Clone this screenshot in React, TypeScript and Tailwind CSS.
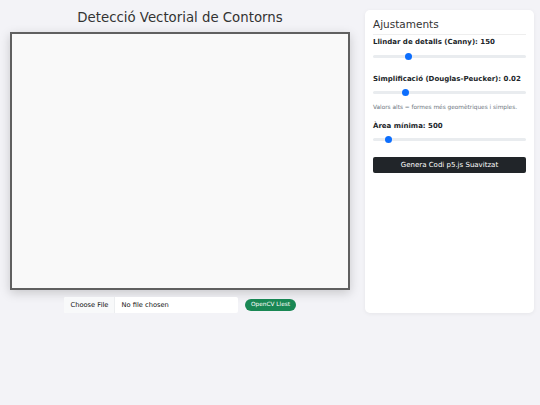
import React from "react";

const font = { fontFamily: '"DejaVu Sans", Verdana, sans-serif' };

type SliderProps = {
  value: number;
  min: number;
  max: number;
  className?: string;
};

const Slider = ({ value, min, max, className }: SliderProps) => {
  const pct = (value - min) / (max - min);
  return (
    <div className={`relative flex h-[8px] items-center ${className ?? ""}`}>
      <div className="h-[3px] w-full rounded-full bg-[#e9ecef]" />
      <div
        className="absolute top-[0.5px] h-[7px] w-[7px] rounded-full bg-[#0d6efd]"
        style={{ left: `calc(${pct} * (100% - 7px))` }}
      />
    </div>
  );
};

const Label = ({ children, className }: { children: React.ReactNode; className?: string }) => (
  <div className={`text-[7px] font-bold leading-[9px] text-[#212529] ${className ?? ""}`}>
    {children}
  </div>
);

export default function App() {
  return (
    <div
      className="flex min-h-[405px] w-full gap-[15px] bg-[#f3f3f7] pl-[10px] pt-[10px]"
      style={font}
    >
      {/* left column */}
      <div className="flex w-[340px] flex-col items-center">
        <h1 className="mb-[6px] text-[13.3px] font-normal leading-[16px] text-[#333]">
          Detecció Vectorial de Contorns
        </h1>
        <div className="h-[258px] w-[340px] border-2 border-[#606060] bg-[#f9f9f9] shadow-[0_3px_10px_rgba(0,0,0,0.18)]" />
        <div className="mt-[7px] flex items-center gap-[7px]">
          <div className="flex h-[16px] w-[174px] items-center overflow-hidden rounded-[2px] bg-white text-[6.7px] text-[#111]">
            <div className="flex h-full items-center border-r border-[#eceef0] bg-[#f8f9fa] px-[6px]">
              Choose File
            </div>
            <div className="px-[6px]">No file chosen</div>
          </div>
          <span className="flex h-[12px] items-center rounded-full bg-[#198754] px-[5.5px] text-[5.8px] leading-none text-white">
            OpenCV Llest
          </span>
        </div>
      </div>

      {/* settings panel */}
      <div className="flex h-[303px] w-[169px] flex-col rounded-[5px] bg-white px-[8px] pt-[8px] shadow-[0_1px_4px_rgba(0,0,0,0.06)]">
        <h2 className="border-b border-[#eeeeee] pb-[3px] text-[10.5px] font-normal leading-[13px] text-[#333]">
          Ajustaments
        </h2>

        <Label className="mt-[3px]">Llindar de detalls (Canny): 150</Label>
        <Slider value={150} min={50} max={500} className="mt-[5px]" />

        <Label className="mt-[15px]">Simplificació (Douglas-Peucker): 0.02</Label>
        <Slider value={0.02} min={0} max={0.1} className="mt-[4px]" />
        <div className="mt-[7px] text-[5.8px] leading-[8px] text-[#6c757d]">
          Valors alts = formes més geomètriques i simples.
        </div>

        <Label className="mt-[11px]">Àrea mínima: 500</Label>
        <Slider value={500} min={100} max={5000} className="mt-[4px]" />

        <button className="mt-[14px] flex h-[16px] w-full items-center justify-center rounded-[2px] bg-[#212529] text-[7px] text-white">
          Genera Codi p5.js Suavitzat
        </button>
      </div>
    </div>
  );
}
